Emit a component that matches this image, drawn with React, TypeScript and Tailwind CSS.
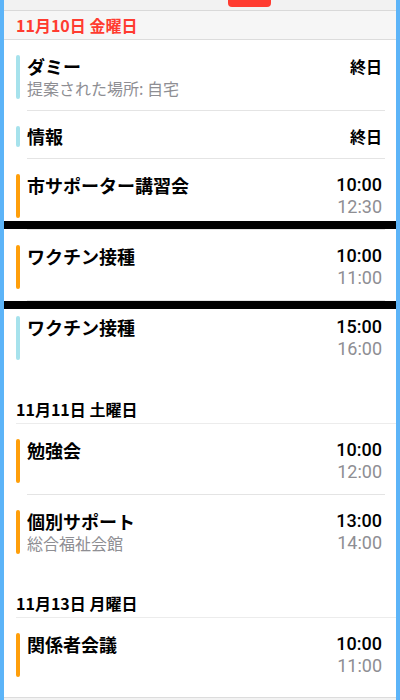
type Ev = {
  title: string;
  sub?: string;
  start?: string;
  end?: string;
  color: "cyan" | "orange";
  last?: boolean;
  marker?: "top" | "bottom";
};

function EventRow({ ev }: { ev: Ev }) {
  const allDay = !ev.start;
  const twoLines = !!ev.sub || !allDay;
  return (
    <div className="relative">
      <div className="flex pt-[15px] pb-[11px] pl-3 pr-[14px]">
        <div
          className={
            "w-1 shrink-0 rounded-full " +
            (ev.color === "cyan" ? "bg-[#a6e2ec]" : "bg-[#ff9f0a]") +
            (twoLines ? " h-[44px]" : " h-[21px]")
          }
        />
        <div className="ml-[7px] flex-1">
          <div
            className={
              "text-[18px] font-bold text-black " +
              (twoLines ? "leading-[22px]" : "leading-[21px]")
            }
          >
            {ev.title}
          </div>
          {ev.sub && (
            <div className="text-[16px] leading-[22px] text-[#8e8e93]">
              {ev.sub}
            </div>
          )}
        </div>
        {allDay ? (
          <div
            className={
              "text-[16px] font-semibold text-black " +
              (twoLines ? "leading-[22px]" : "leading-[21px]")
            }
          >
            終日
          </div>
        ) : (
          <div className="text-right text-[18px] leading-[22px] [font-family:Roboto,'Liberation_Sans',sans-serif]">
            <div className="font-medium text-black">{ev.start}</div>
            <div className="text-[#8e8e93]">{ev.end}</div>
          </div>
        )}
      </div>
      {!ev.last && <div className="ml-[23px] mr-[11px] h-px bg-[#e4e4e4]" />}
      {ev.marker === "bottom" && (
        <div className="absolute left-0 right-0 bottom-[1px] h-2 bg-black" />
      )}
      {ev.marker === "top" && (
        <div className="absolute left-0 right-0 top-0 h-2 bg-black" />
      )}
    </div>
  );
}

function DayHeader({ label }: { label: string }) {
  return (
    <div className="pl-3">
      <div className="pt-[28px] pb-1 text-[16px] leading-[20px] font-bold text-black border-b border-[#ececec]">
        {label}
      </div>
    </div>
  );
}

const day1: Ev[] = [
  { title: "ダミー", sub: "提案された場所: 自宅", color: "cyan" },
  { title: "情報", color: "cyan" },
  { title: "市サポーター講習会", start: "10:00", end: "12:30", color: "orange", marker: "bottom" },
  { title: "ワクチン接種", start: "10:00", end: "11:00", color: "orange" },
  { title: "ワクチン接種", start: "15:00", end: "16:00", color: "cyan", last: true, marker: "top" },
];

const day2: Ev[] = [
  { title: "勉強会", start: "10:00", end: "12:00", color: "orange" },
  { title: "個別サポート", sub: "総合福祉会館", start: "13:00", end: "14:00", color: "orange", last: true },
];

export default function App() {
  return (
    <div className="w-[400px] h-[700px] overflow-hidden bg-[#5cb4f8] px-1 [font-family:'Noto_Sans_CJK_JP',sans-serif]">
      <div className="flex h-full flex-col bg-white">
        <div className="h-[11px] shrink-0 bg-[#f2f2f2] border-b border-[#d9d9d9]">
          <div className="ml-[224px] h-[7px] w-[43px] rounded-b-[4px] bg-[#ff3b30]" />
        </div>
        <div className="flex h-[29px] shrink-0 items-center pl-3 bg-[#f6f6f6] border-b border-[#dcdcdc] text-[16px] font-bold text-[#ff3b30]">
          11月10日 金曜日
        </div>
        {day1.map((ev, i) => (
          <EventRow key={i} ev={ev} />
        ))}
        <DayHeader label="11月11日 土曜日" />
        {day2.map((ev, i) => (
          <EventRow key={i} ev={ev} />
        ))}
        <DayHeader label="11月13日 月曜日" />
        <div className="pb-[9px]">
          <EventRow
            ev={{ title: "関係者会議", start: "10:00", end: "11:00", color: "orange", last: true }}
          />
        </div>
        <div className="flex-1 bg-[#f2f2f2] border-t border-[#dcdcdc]" />
      </div>
    </div>
  );
}
